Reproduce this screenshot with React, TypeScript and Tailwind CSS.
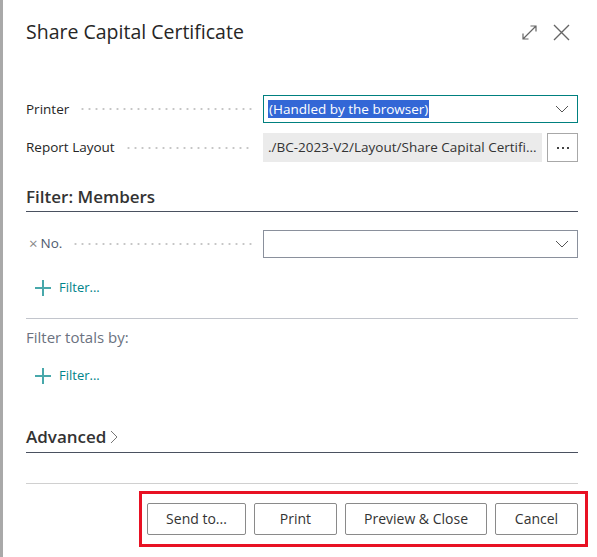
import React from "react";

const font = { fontFamily: '"Open Sans", "Noto Sans", sans-serif' };

function Dots() {
  return (
    <div className="flex-1 h-[2px] mx-[10px] bg-[radial-gradient(circle,#c6c6c6_1px,transparent_1.2px)] bg-[length:7px_2px] bg-repeat-x" />
  );
}

function Chevron() {
  return (
    <svg width="14" height="8" viewBox="0 0 14 8" className="text-[#555]">
      <path d="M1 1 L7 7 L13 1" fill="none" stroke="currentColor" strokeWidth="1" />
    </svg>
  );
}

function Plus() {
  return (
    <svg width="16" height="16" viewBox="0 0 16 16">
      <path d="M8 0 V16 M0 8 H16" stroke="#48a8ab" strokeWidth="2" />
    </svg>
  );
}

function AddFilter() {
  return (
    <div className="flex items-center gap-[8px] pl-[9px] h-[20px]">
      <Plus />
      <span className="text-[13px] text-[#00838a]">Filter...</span>
    </div>
  );
}

function Btn({ label, w }: { label: string; w: string }) {
  return (
    <button className={`${w} h-[32px] border border-[#8a8a8a] rounded-[2px] bg-white text-[14px] text-[#333]`}>
      {label}
    </button>
  );
}

export default function App() {
  return (
    <div className="flex w-[597px] h-[557px] bg-white overflow-hidden" style={font}>
      <div className="w-[3px] bg-[#a9a9a9]" />
      <div className="flex-1 flex flex-col pl-[23px] pr-[19px]">
        <div className="flex items-center justify-between h-[38px] mt-[13px]">
          <h1 className="text-[19.5px] text-[#262626]">Share Capital Certificate</h1>
          <div className="flex items-center gap-[16px] pr-[8px] text-[#666]">
            <svg width="15" height="15" viewBox="0 0 15 15">
              <path d="M1 14 L14 1 M1 8.5 V14 H6.5 M8.5 1 H14 V6.5" fill="none" stroke="currentColor" strokeWidth="1.2" />
            </svg>
            <svg width="17" height="17" viewBox="0 0 17 17">
              <path d="M1 1 L16 16 M16 1 L1 16" fill="none" stroke="currentColor" strokeWidth="1.4" />
            </svg>
          </div>
        </div>

        <div className="mt-[44px] flex flex-col gap-[10px]">
          <div className="flex items-center h-[28px]">
            <div className="w-[237px] flex items-center">
              <span className="text-[13.5px] text-[#262626]">Printer</span>
              <Dots />
            </div>
            <div className="flex-1 h-[28px] border border-[#00807f] flex items-center justify-between pl-[4px] pr-[8px]">
              <span className="bg-[#3367d6] text-white text-[13.5px] leading-[18px] px-[1px]">(Handled by the browser)</span>
              <Chevron />
            </div>
          </div>
          <div className="flex items-center h-[29px]">
            <div className="w-[237px] flex items-center">
              <span className="text-[13.5px] text-[#262626]">Report Layout</span>
              <Dots />
            </div>
            <div className="flex-1 h-[29px] bg-[#ebebeb] flex items-center pl-[5px] text-[13.5px] text-[#333]">
              ./BC-2023-V2/Layout/Share Capital Certifi...
            </div>
            <div className="ml-[5px] w-[31px] h-[29px] border border-[#a8a8a8] flex items-center justify-center gap-[3px]">
              <span className="w-[2px] h-[2px] bg-[#444]" />
              <span className="w-[2px] h-[2px] bg-[#444]" />
              <span className="w-[2px] h-[2px] bg-[#444]" />
            </div>
          </div>
        </div>

        <div className="mt-[22px] border-b border-[#4a5160] pb-[1px]">
          <h2 className="text-[17px] font-semibold text-[#333]">Filter: Members</h2>
        </div>

        <div className="flex items-center h-[28px] mt-[18px]">
          <div className="w-[237px] flex items-center">
            <span className="text-[15px] leading-none text-[#888] pl-[3px] mr-[3px]">×</span>
            <span className="text-[13.5px] text-[#4e5a6e]">No.</span>
            <Dots />
          </div>
          <div className="flex-1 h-[28px] border border-[#8a909c] flex items-center justify-end pr-[8px]">
            <Chevron />
          </div>
        </div>

        <div className="mt-[20px]">
          <AddFilter />
        </div>

        <div className="mt-[20px] border-t border-[#c2c5cc]" />
        <div className="mt-[7px] text-[15px] text-[#6b7280]">Filter totals by:</div>
        <div className="mt-[18px]">
          <AddFilter />
        </div>

        <div className="mt-[38px] border-b border-[#4a5160] pb-[2px] flex items-center">
          <span className="text-[17px] font-semibold text-[#333]">Advanced</span>
          <svg width="8" height="14" viewBox="0 0 8 14" className="ml-[4px] text-[#777]">
            <path d="M1 1 L7 7 L1 13" fill="none" stroke="currentColor" strokeWidth="1" />
          </svg>
        </div>

        <div className="mt-[30px] border-t border-[#d0d0d0]" />

        <div className="flex justify-end mt-[7px] -mr-[10px]">
          <div className="border-[3px] border-[#e81123] flex gap-[8px] pl-[5px] pr-[7px] pt-[9px] pb-[9px]">
            <Btn label="Send to..." w="w-[99px]" />
            <Btn label="Print" w="w-[83px]" />
            <Btn label="Preview & Close" w="w-[142px]" />
            <Btn label="Cancel" w="w-[83px]" />
          </div>
        </div>
      </div>
    </div>
  );
}
